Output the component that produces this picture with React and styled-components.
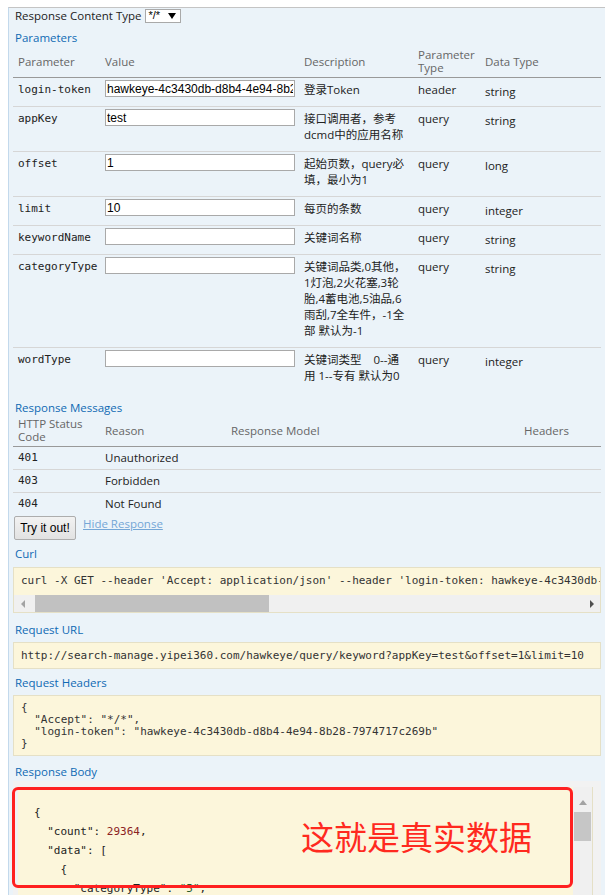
import React from "react";
import styled, { createGlobalStyle } from "styled-components";

const GlobalStyle = createGlobalStyle`
  html, body { margin: 0; padding: 0; background: #fff; overflow: hidden; }
  body {
    font-family: "Open Sans", "Noto Sans CJK SC", sans-serif;
    font-size: 11.5px;
    color: #222;
  }
  * { box-sizing: border-box; }
`;

const MONO = `"DejaVu Sans Mono", "Liberation Mono", monospace`;

const Page = styled.div`
  width: 605px;
  height: 895px;
  overflow: hidden;
  padding-top: 7px;
`;

const Panel = styled.div`
  margin-left: 8px;
  background: #ebf3f9;
  border-left: 1px solid #c3d9ec;
  border-top: 1px solid #c4c4c4;
  padding: 0 4px;
  min-height: 900px;
`;

const TypeRow = styled.div`
  display: flex;
  align-items: center;
  gap: 4px;
  height: 15px;
  padding-left: 2px;
  line-height: 15px;
`;

const FakeSelect = styled.div`
  display: flex;
  align-items: center;
  gap: 8px;
  width: 36px;
  height: 14px;
  padding-left: 2px;
  background: #fff;
  border: 1px solid #a9a9a9;
  font-family: "Liberation Sans", Arial, sans-serif;
  font-size: 11px;
  color: #000;
`;

const Heading = styled.h4`
  margin: ${(p) => p.$mt}px 0 0;
  padding-left: 2px;
  font-weight: normal;
  font-size: 11.5px;
  line-height: 16px;
  color: #0f6ab4;
`;

const Table = styled.table`
  width: 100%;
  border-collapse: collapse;
  table-layout: fixed;
`;

const Th = styled.th`
  text-align: left;
  font-weight: normal;
  color: #666;
  line-height: 13px;
  padding: ${(p) => (p.$tight ? "1px 5px 3px" : "2px 5px 3px")};
  vertical-align: middle;
  border-bottom: 1px solid #999;
`;

const Tr = styled.tr`
  &:not(:last-child) td { border-bottom: 1px solid #d6d6d6; }
`;

const Td = styled.td`
  padding: ${(p) =>
    p.$compact ? "3px 5px 3px" : `${4 + (p.$shift || 0)}px 5px ${8 - (p.$shift || 0)}px`};
  line-height: 16px;
  vertical-align: top;
  color: #222;
  font-family: ${(p) => (p.$mono ? MONO : "inherit")};
  font-size: ${(p) => (p.$mono ? "11px" : "inherit")};
  white-space: nowrap;
`;

const Cell = styled.div`
  height: ${(p) => p.$h}px;
  line-height: 16px;
  overflow: visible;
`;

const Line = styled.div`
  display: block;
  height: 16px;
  line-height: 16px;
  white-space: pre;
`;

const ValueInput = styled.input`
  display: block;
  width: 190px;
  height: 17px;
  margin: -2px 0 0;
  padding: 0 1px;
  border: 1px solid #a9a9a9;
  background: #fff;
  font-family: "Liberation Sans", Arial, sans-serif;
  font-size: 12px;
  color: #000;
  outline: none;
`;

const ButtonRow = styled.div`
  display: flex;
  align-items: flex-start;
  gap: 7px;
  margin-top: 1px;
  padding-left: 1px;
`;

const TryButton = styled.button`
  width: 62px;
  height: 24px;
  padding: 0;
  background: linear-gradient(#f2f2f2, #e2e2e2);
  border: 1px solid #adadad;
  border-radius: 2px;
  font-family: "Liberation Sans", Arial, sans-serif;
  font-size: 12px;
  color: #000;
`;

const HideLink = styled.a`
  line-height: 16px;
  color: #74a6d6;
  text-decoration: underline;
  cursor: pointer;
`;

const CodeBox = styled.div`
  margin-top: ${(p) => p.$mt}px;
  background: #fcf6db;
  border: 1px solid #e5e0c6;
`;

const CodeLine = styled.div`
  padding: ${(p) => p.$pad};
  font-family: ${MONO};
  font-size: 11px;
  line-height: ${(p) => p.$lh}px;
  color: #333;
  white-space: pre;
  overflow: hidden;
`;

const HScroll = styled.div`
  display: flex;
  align-items: center;
  height: 17px;
  background: #f0f0f0;
`;

const ArrowBtn = styled.div`
  display: flex;
  align-items: center;
  justify-content: center;
  width: 17px;
  height: 17px;
  margin-left: ${(p) => (p.$end ? "auto" : "0")};
`;

const HThumb = styled.div`
  width: 234px;
  height: 17px;
  margin-left: 4px;
  background: #c1c1c1;
`;

const BodyWrap = styled.div`
  position: relative;
  display: flex;
  margin-top: 1px;
  padding: 6px 7px 0 5px;
  background: #f2f2f2;
  height: 200px;
`;

const BodyPre = styled.div`
  flex: 0 0 555px;
  background: #fcf6db;
  padding: 16px 0 0 16px;
  font-family: ${MONO};
  font-size: 11px;
  line-height: 19px;
  color: #222;
  white-space: pre;
  overflow: hidden;
`;

const VScroll = styled.div`
  display: flex;
  flex-direction: column;
  align-items: center;
  width: 20px;
  background: #f0f0f0;
  border-right: 1px solid #e5e0c6;
  padding-top: 12px;
`;

const VThumb = styled.div`
  width: 17px;
  height: 29px;
  margin-top: 6px;
  background: #c6c6c6;
`;

const Num = styled.span`
  color: #8b2222;
`;

const Str = styled.span`
  color: #2a5d2a;
`;

const Annotation = styled.div`
  position: absolute;
  left: -1px;
  top: 6px;
  width: 561px;
  height: 101px;
  border: 3px solid #ff2020;
  border-radius: 6px;
  pointer-events: none;
`;

const AnnotationText = styled.div`
  position: absolute;
  left: 286px;
  top: 28px;
  font-family: "Noto Sans CJK SC", sans-serif;
  font-size: 33px;
  line-height: 36px;
  color: #ff2a1f;
  white-space: nowrap;
`;

const Tri = ({ dir, color }) => {
  const pts = {
    left: "5,0 5,8 1,4",
    right: "1,0 1,8 5,4",
    up: "0,6 8,6 4,1",
    down: "0,1 8,1 4,7",
  }[dir];
  const w = dir === "left" || dir === "right" ? 6 : 8;
  const h = dir === "left" || dir === "right" ? 8 : 7;
  return (
    <svg width={w} height={h} viewBox={`0 0 ${w} ${h}`}>
      <polygon points={pts} fill={color} />
    </svg>
  );
};

const params = [
  { name: "login-token", value: "hawkeye-4c3430db-d8b4-4e94-8b28-7974717c269b", desc: ["登录Token"], ptype: "header", dtype: "string" },
  { name: "appKey", value: "test", desc: ["接口调用者，参考", "dcmd中的应用名称"], ptype: "query", dtype: "string" },
  { name: "offset", value: "1", desc: ["起始页数，query必", "填，最小为1"], ptype: "query", dtype: "long" },
  { name: "limit", value: "10", desc: ["每页的条数"], ptype: "query", dtype: "integer" },
  { name: "keywordName", value: "", desc: ["关键词名称"], ptype: "query", dtype: "string" },
  {
    name: "categoryType",
    value: "",
    desc: ["关键词品类,0其他，", "1灯泡,2火花塞,3轮", "胎,4蓄电池,5油品,6", "雨刮,7全车件，-1全", "部 默认为-1"],
    ptype: "query",
    dtype: "string",
  },
  { name: "wordType", value: "", desc: ["关键词类型    0--通", "用 1--专有 默认为0"], ptype: "query", dtype: "integer" },
];

const messages = [
  { code: "401", reason: "Unauthorized" },
  { code: "403", reason: "Forbidden" },
  { code: "404", reason: "Not Found" },
];

const curl =
  "curl -X GET --header 'Accept: application/json' --header 'login-token: hawkeye-4c3430db-d8b4-4e94-8b28-7974717c269b' 'http://search-manage.yipei360.com/hawkeye/query/keyword?appKey=test&offset=1&limit=10'";

export default function App() {
  return (
    <>
      <GlobalStyle />
      <Page>
        <Panel>
          <TypeRow>
            <span>Response Content Type</span>
            <FakeSelect>
              <span>*/*</span>
              <Tri dir="down" color="#000" />
            </FakeSelect>
          </TypeRow>

          <Heading $mt={7}>Parameters</Heading>
          <Table>
            <colgroup>
              <col style={{ width: 87 }} />
              <col style={{ width: 199 }} />
              <col style={{ width: 114 }} />
              <col style={{ width: 67 }} />
              <col />
            </colgroup>
            <thead>
              <tr>
                <Th>Parameter</Th>
                <Th>Value</Th>
                <Th>Description</Th>
                <Th>
                  Parameter
                  <br />
                  Type
                </Th>
                <Th>Data Type</Th>
              </tr>
            </thead>
            <tbody>
              {params.map((p) => (
                <Tr key={p.name}>
                  <Td $mono>
                    <Line>{p.name}</Line>
                  </Td>
                  <Td>
                    <Cell $h={16}>
                      <ValueInput defaultValue={p.value} />
                    </Cell>
                  </Td>
                  <Td>
                    {p.desc.map((l, i) => (
                      <Line key={i}>{l}</Line>
                    ))}
                  </Td>
                  <Td>
                    <Line>{p.ptype}</Line>
                  </Td>
                  <Td $shift={2}>
                    <Line>{p.dtype}</Line>
                  </Td>
                </Tr>
              ))}
            </tbody>
          </Table>

          <Heading $mt={8}>Response Messages</Heading>
          <Table>
            <colgroup>
              <col style={{ width: 87 }} />
              <col style={{ width: 126 }} />
              <col style={{ width: 293 }} />
              <col />
            </colgroup>
            <thead>
              <tr>
                <Th $tight>
                  HTTP Status
                  <br />
                  Code
                </Th>
                <Th $tight>Reason</Th>
                <Th $tight>Response Model</Th>
                <Th $tight>Headers</Th>
              </tr>
            </thead>
            <tbody>
              {messages.map((m) => (
                <Tr key={m.code}>
                  <Td $compact $mono>
                    <Line>{m.code}</Line>
                  </Td>
                  <Td $compact>
                    <Line>{m.reason}</Line>
                  </Td>
                  <Td $compact>
                    <Line />
                  </Td>
                  <Td $compact>
                    <Line />
                  </Td>
                </Tr>
              ))}
            </tbody>
          </Table>

          <ButtonRow>
            <TryButton>Try it out!</TryButton>
            <HideLink>Hide Response</HideLink>
          </ButtonRow>

          <Heading $mt={6}>Curl</Heading>
          <CodeBox $mt={5}>
            <CodeLine $pad="6px 7px 8px" $lh={13}>
              {curl}
            </CodeLine>
            <HScroll>
              <ArrowBtn>
                <Tri dir="left" color="#a3a3a3" />
              </ArrowBtn>
              <HThumb />
              <ArrowBtn $end>
                <Tri dir="right" color="#505050" />
              </ArrowBtn>
            </HScroll>
          </CodeBox>

          <Heading $mt={9}>Request URL</Heading>
          <CodeBox $mt={4}>
            <CodeLine $pad="6px 7px 6px" $lh={13}>
              http://search-manage.yipei360.com/hawkeye/query/keyword?appKey=test&amp;offset=1&amp;limit=10
            </CodeLine>
          </CodeBox>

          <Heading $mt={6}>Request Headers</Heading>
          <CodeBox $mt={4}>
            <CodeLine $pad="6px 7px 5px" $lh={12}>
              {`{\n  "Accept": "*/*",\n  "login-token": "hawkeye-4c3430db-d8b4-4e94-8b28-7974717c269b"\n}`}
            </CodeLine>
          </CodeBox>

          <Heading $mt={8}>Response Body</Heading>
          <BodyWrap>
            <BodyPre>
              {"{\n"}
              {'  "count": '}
              <Num>29364</Num>
              {",\n"}
              {'  "data": [\n'}
              {"    {\n"}
              {'      "categoryType": '}
              <Str>"5"</Str>
              {",\n"}
              {'      "id": '}
              <Num>1</Num>
              {",\n"}
              {'      "keywordName": '}
              <Str>"机油"</Str>
              {",\n"}
            </BodyPre>
            <VScroll>
              <Tri dir="up" color="#a3a3a3" />
              <VThumb />
            </VScroll>
            <Annotation>
              <AnnotationText>这就是真实数据</AnnotationText>
            </Annotation>
          </BodyWrap>
        </Panel>
      </Page>
    </>
  );
}
